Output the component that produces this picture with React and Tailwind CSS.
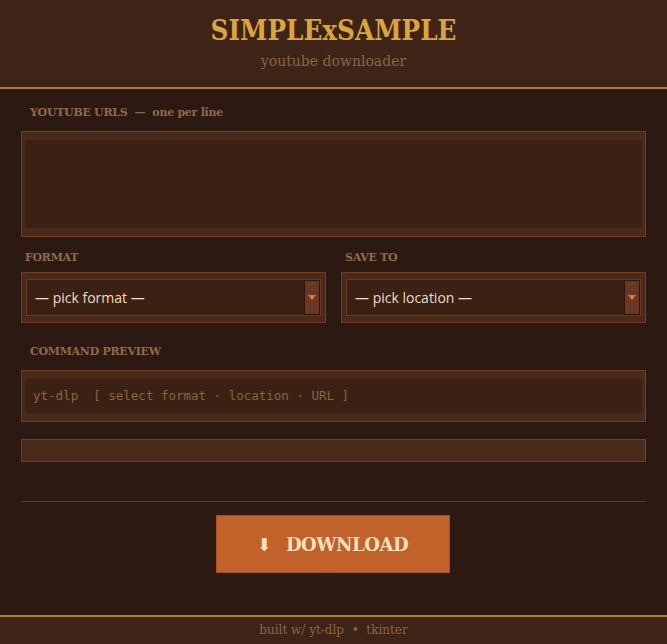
const serif = { fontFamily: '"DejaVu Serif", "Liberation Serif", serif' };
const sans = { fontFamily: '"Open Sans", "Noto Sans", sans-serif' };
const mono = { fontFamily: '"DejaVu Sans Mono", "Liberation Mono", monospace' };

function Label({ children, className = '' }) {
  return (
    <div
      className={`text-[11px] leading-[14px] font-bold tracking-tight text-[#8e6b4a] ${className}`}
      style={serif}
    >
      {children}
    </div>
  );
}

function Select({ placeholder }) {
  return (
    <div className="border border-[#7a3c1e] bg-[#4a2a1b] px-[4px] py-[6px]">
      <div className="flex h-[37px] border border-[#6e381d] bg-[#3b2113]">
        <div className="flex flex-1 items-center pl-[8px] text-[14px] text-[#ecdcc4]" style={sans}>
          {placeholder}
        </div>
        <div className="flex w-[16px] items-center justify-center border border-[#2a170e] bg-[#6a3822]">
          <svg width="8" height="5" viewBox="0 0 8 5">
            <path d="M0 0 L8 0 L4 5 Z" fill="#e07a3a" />
          </svg>
        </div>
      </div>
    </div>
  );
}

export default function App() {
  return (
    <div className="flex h-[644px] w-[667px] flex-col bg-[#2c1912]">
      <header className="h-[89px] border-b-2 border-[#b07a2c] bg-[#3d2416] pt-[14px] text-center">
        <h1
          className="text-[27.5px] font-bold leading-[32px] text-[#d9a53c]"
          style={{ ...serif, fontStretch: 'condensed' }}
        >
          SIMPLExSAMPLE
        </h1>
        <p className="mt-[5px] text-[14px] text-[#8a6444]" style={serif}>
          youtube downloader
        </p>
      </header>

      <main className="flex-1 px-[21px] pt-[17px]">
        <Label className="pl-[9px]">YOUTUBE URLS&nbsp; —&nbsp; one per line</Label>
        <div className="mt-[11px] h-[106px] border border-[#7a3c1e] bg-[#4a2a1b] px-[3px] py-[8px]">
          <div className="h-full bg-[#3b2113]" />
        </div>

        <div className="mt-[14px] grid grid-cols-2 gap-[15px]">
          <div>
            <Label className="pl-[4px]">FORMAT</Label>
            <div className="mt-[7px]">
              <Select placeholder="— pick format —" />
            </div>
          </div>
          <div>
            <Label className="pl-[4px]">SAVE TO</Label>
            <div className="mt-[7px]">
              <Select placeholder="— pick location —" />
            </div>
          </div>
        </div>

        <Label className="mt-[22px] pl-[9px]">COMMAND PREVIEW</Label>
        <div className="mt-[11px] h-[52px] border border-[#7a3c1e] bg-[#4a2a1b] px-[3px] py-[8px]">
          <div className="flex h-full items-center bg-[#3b2113] pl-[8px] text-[12.5px] whitespace-pre text-[#8a6444]" style={mono}>
            yt-dlp  [ select format · location · URL ]
          </div>
        </div>

        <div className="mt-[17px] h-[23px] border border-[#7a3c1e] bg-[#4a2a1b]" />

        <div className="mt-[39px] h-px bg-[#6b361b]" />

        <div className="mt-[13px] flex justify-center">
          <button
            className="flex h-[58px] w-[234px] -translate-x-px items-center justify-center gap-[14px] border border-[#a9501f] bg-[#c1622b] text-[18px] font-bold text-[#f5e1bd]"
            style={serif}
          >
            <span className="text-[18px]">⬇</span>
            <span className="tracking-tight">DOWNLOAD</span>
          </button>
        </div>
      </main>

      <footer className="h-[29px] border-t-2 border-[#b07a2c] bg-[#3d2416] text-center text-[12px] leading-[27px] text-[#8a6444]" style={serif}>
        built w/ yt-dlp&nbsp; •&nbsp; tkinter
      </footer>
    </div>
  );
}
